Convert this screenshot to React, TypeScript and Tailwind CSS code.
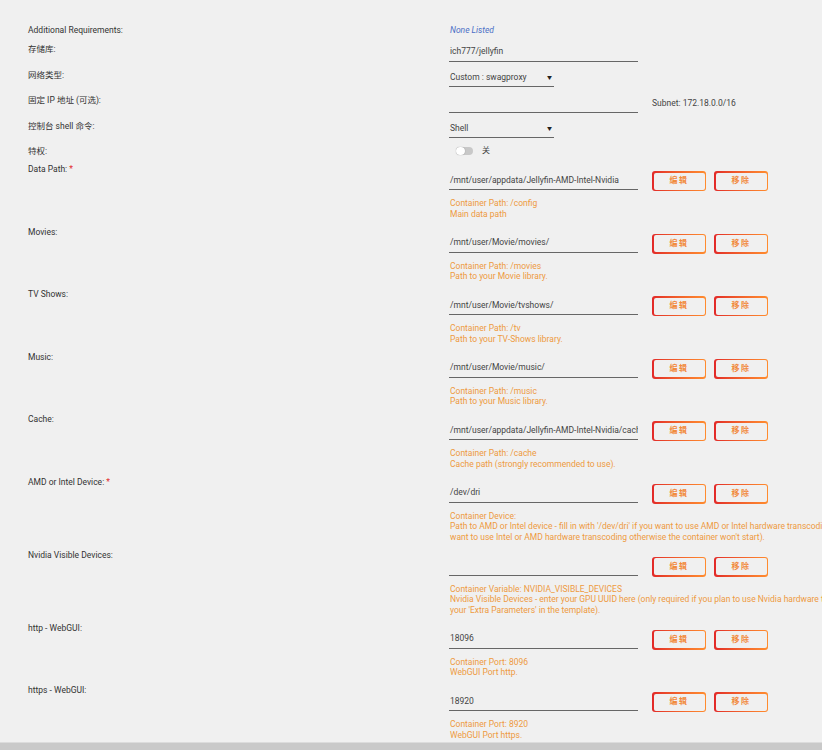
import React from "react";

const font = { fontFamily: 'Roboto, "Noto Sans CJK SC", sans-serif' };

function Btn({ children }: { children: React.ReactNode }) {
  return (
    <div className="w-[54px] h-[20px] p-[1.5px] rounded-[3px] bg-linear-to-r from-[#e22828] to-[#ff8c2f]">
      <div className="w-full h-full rounded-[2px] bg-[#f0f0f0] flex items-center justify-center">
        <span className="text-[8px] font-semibold tracking-[1.5px] leading-none text-[#f28a3c]">
          {children}
        </span>
      </div>
    </div>
  );
}

type PathRow = { label: string; req?: boolean; value: string; desc: string[] };

const rows: PathRow[] = [
  { label: "Data Path:", req: true, value: "/mnt/user/appdata/Jellyfin-AMD-Intel-Nvidia", desc: ["Container Path: /config", "Main data path"] },
  { label: "Movies:", value: "/mnt/user/Movie/movies/", desc: ["Container Path: /movies", "Path to your Movie library."] },
  { label: "TV Shows:", value: "/mnt/user/Movie/tvshows/", desc: ["Container Path: /tv", "Path to your TV-Shows library."] },
  { label: "Music:", value: "/mnt/user/Movie/music/", desc: ["Container Path: /music", "Path to your Music library."] },
  { label: "Cache:", value: "/mnt/user/appdata/Jellyfin-AMD-Intel-Nvidia/cache", desc: ["Container Path: /cache", "Cache path (strongly recommended to use)."] },
  {
    label: "AMD or Intel Device:",
    req: true,
    value: "/dev/dri",
    desc: [
      "Container Device:",
      "Path to AMD or Intel device - fill in with '/dev/dri' if you want to use AMD or Intel hardware transcoding (leave empty if you don't",
      "want to use Intel or AMD hardware transcoding otherwise the container won't start).",
    ],
  },
  {
    label: "Nvidia Visible Devices:",
    value: "",
    desc: [
      "Container Variable: NVIDIA_VISIBLE_DEVICES",
      "Nvidia Visible Devices - enter your GPU UUID here (only required if you plan to use Nvidia hardware transcoding, also add '--runtime=nvidia' to",
      "your 'Extra Parameters' in the template).",
    ],
  },
  { label: "http - WebGUI:", value: "18096", desc: ["Container Port: 8096", "WebGUI Port http."] },
  { label: "https - WebGUI:", value: "18920", desc: ["Container Port: 8920", "WebGUI Port https."] },
];

function Label({ children, req }: { children: React.ReactNode; req?: boolean }) {
  return (
    <div className="w-[449px] shrink-0 pl-[28px] text-[8.5px] leading-[11px] text-[#333]">
      {children}
      {req && <span className="text-[#e22828]"> *</span>}
    </div>
  );
}

export default function App() {
  return (
    <div className="w-[822px] h-[750px] flex flex-col overflow-hidden bg-[#f0f0f0]" style={font}>
      <div className="flex-1 overflow-hidden pt-[25px]">
        {/* Additional Requirements */}
        <div className="flex h-[19px]">
          <Label>Additional Requirements:</Label>
          <div className="text-[8.5px] leading-[11px] italic text-[#4b6fc6] pl-[1px]">None Listed</div>
        </div>
        {/* Repository */}
        <div className="flex h-[26px]">
          <Label>存储库:</Label>
          <div className="w-[189px] h-[19px] mt-[-1px] pb-[2px] border-b border-[#666] flex items-center pl-[1px] text-[8.5px] text-[#444]">
            ich777/jellyfin
          </div>
        </div>
        {/* Network type */}
        <div className="flex h-[25px]">
          <Label>网络类型:</Label>
          <div className="w-[105px] h-[18px] mt-[-1px] border-b border-[#666] flex items-center justify-between pl-[1px] pr-[2px] text-[8.5px] text-[#444]">
            <span>Custom : swagproxy</span>
            <span className="text-[5px] text-[#222]">▼</span>
          </div>
        </div>
        {/* Fixed IP */}
        <div className="flex h-[26px]">
          <Label>固定 IP 地址 (可选):</Label>
          <div className="w-[189px] h-[19px] mt-[-1px] border-b border-[#666]"></div>
          <div className="ml-[14px] pt-[3px] text-[8.5px] leading-[11px] text-[#444]">Subnet: 172.18.0.0/16</div>
        </div>
        {/* Shell */}
        <div className="flex h-[25px]">
          <Label>控制台 shell 命令:</Label>
          <div className="w-[105px] h-[18px] mt-[-1px] border-b border-[#666] flex items-center justify-between pl-[1px] pr-[2px] text-[8.5px] text-[#444]">
            <span>Shell</span>
            <span className="text-[5px] text-[#222]">▼</span>
          </div>
        </div>
        {/* Privileged */}
        <div className="flex h-[18px]">
          <Label>特权:</Label>
          <div className="flex items-center pl-[7px] gap-[9px] h-[8px] mt-[1px]">
            <div className="w-[17px] h-[8px] rounded-[4px] bg-[#c8c8c8] relative">
              <div className="absolute left-0 top-0 w-[9px] h-[8px] rounded-[4px] bg-white shadow-[0_0_1px_rgba(0,0,0,0.4)]"></div>
            </div>
            <span className="text-[8px] text-[#444] leading-none">关</span>
          </div>
        </div>
        {rows.map((r) => (
          <div key={r.label} className="flex pb-[7.5px]">
            <Label req={r.req}>{r.label}</Label>
            <div className="flex flex-col">
              <div className="flex items-start mt-[7px]">
                <div className="w-[189px] h-[19px] border-b border-[#666] flex items-center pl-[1px] text-[8.5px] text-[#444] overflow-hidden whitespace-nowrap">
                  {r.value}
                </div>
                <div className="ml-[14px]">
                  <Btn>编辑</Btn>
                </div>
                <div className="ml-[8px]">
                  <Btn>移除</Btn>
                </div>
              </div>
              <div className="mt-[7px] pl-[1px] text-[8.5px] leading-[10.5px] text-[#ee9a3f] whitespace-nowrap">
                {r.desc.map((d, i) => (
                  <div key={i}>{d}</div>
                ))}
              </div>
            </div>
          </div>
        ))}
      </div>
      <div className="h-[8px] shrink-0 bg-[#c9c9c9] border-t border-[#dcdcdc]"></div>
    </div>
  );
}
